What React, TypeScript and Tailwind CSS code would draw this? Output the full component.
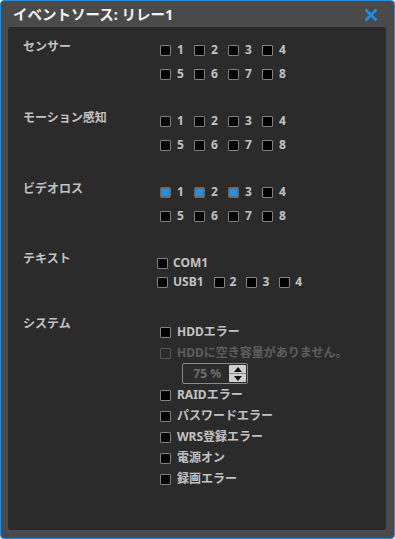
import React from "react";

const font = { fontFamily: '"Noto Sans", "Noto Sans CJK JP", sans-serif' };

function Box({ checked = false, disabled = false }: { checked?: boolean; disabled?: boolean }) {
  if (checked)
    return <span className="inline-block w-[11px] h-[11px] shrink-0 rounded-[2px] border-2 border-[#6b6b6b] bg-[#1c92ee]" />;
  if (disabled)
    return <span className="inline-block w-[11px] h-[11px] shrink-0 rounded-[1px] border border-[#575757] bg-[#2b2b2b]" />;
  return <span className="inline-block w-[11px] h-[11px] shrink-0 rounded-[1px] border border-[#828282] bg-black" />;
}

function NumItem({ n, checked = false }: { n: string; checked?: boolean }) {
  return (
    <div className="w-[34px] flex items-center gap-[6px]">
      <Box checked={checked} />
      <span>{n}</span>
    </div>
  );
}

function NumRows({ a, b, checked = [] as string[] }: { a: string[]; b: string[]; checked?: string[] }) {
  return (
    <div className="flex flex-col gap-[8px] pt-[3px] pl-[1px]">
      <div className="flex h-[16px] items-center">
        {a.map((n) => (
          <NumItem key={n} n={n} checked={checked.includes(n)} />
        ))}
      </div>
      <div className="flex h-[16px] items-center">
        {b.map((n) => (
          <NumItem key={n} n={n} checked={checked.includes(n)} />
        ))}
      </div>
    </div>
  );
}

function SysItem({ label, disabled = false }: { label: string; disabled?: boolean }) {
  return (
    <div className={"flex h-[16px] items-center gap-[6px] " + (disabled ? "text-[#5e5e5e]" : "")}>
      <Box disabled={disabled} />
      <span>{label}</span>
    </div>
  );
}

export default function App() {
  return (
    <div
      style={font}
      className="w-[395px] h-[539px] rounded-[4px] border border-[#2a8ee0] bg-[#4a4a4a] flex flex-col overflow-hidden"
    >
      <div className="h-[26px] shrink-0 flex items-center justify-between pl-[12px] pr-[16px]">
        <span className="text-[14.5px] font-bold text-[#f2f2f2] leading-none pt-[1px]">イベントソース: リレー1</span>
        <svg width="14" height="14" viewBox="0 0 14 14" className="mt-[2px]">
          <path d="M1.5 1.5 L12.5 12.5 M12.5 1.5 L1.5 12.5" stroke="#1d8fe8" strokeWidth="2.6" strokeLinecap="butt" />
        </svg>
      </div>
      <div className="flex-1 ml-[7px] mr-[8px] mb-[8px] rounded-[3px] bg-[#2b2b2b] pt-[12px] pl-[15px] text-[12px] font-bold leading-[16px] text-[#c2c2c2]">
        {/* Sensor */}
        <div className="flex">
          <div className="w-[136px] shrink-0">センサー</div>
          <NumRows a={["1", "2", "3", "4"]} b={["5", "6", "7", "8"]} />
        </div>
        {/* Motion */}
        <div className="flex mt-[28px]">
          <div className="w-[136px] shrink-0">モーション感知</div>
          <NumRows a={["1", "2", "3", "4"]} b={["5", "6", "7", "8"]} />
        </div>
        {/* Video loss */}
        <div className="flex mt-[28px]">
          <div className="w-[136px] shrink-0">ビデオロス</div>
          <NumRows a={["1", "2", "3", "4"]} b={["5", "6", "7", "8"]} checked={["1", "2", "3"]} />
        </div>
        {/* Text */}
        <div className="flex mt-[27px]">
          <div className="w-[134px] shrink-0">テキスト</div>
          <div className="flex flex-col gap-[3px] pt-[4px]">
            <div className="flex h-[16px] items-center gap-[5px]">
              <Box />
              <span>COM1</span>
            </div>
            <div className="flex h-[16px] items-center">
              <div className="flex items-center gap-[5px] mr-[10px]">
                <Box />
                <span>USB1</span>
              </div>
              <div className="flex items-center gap-[5px] mr-[10px]">
                <Box />
                <span>2</span>
              </div>
              <div className="flex items-center gap-[5px] mr-[10px]">
                <Box />
                <span>3</span>
              </div>
              <div className="flex items-center gap-[5px]">
                <Box />
                <span>4</span>
              </div>
            </div>
          </div>
        </div>
        {/* System */}
        <div className="flex mt-[26px]">
          <div className="w-[136px] shrink-0">システム</div>
          <div className="flex flex-col pt-[8px] pl-[1px]">
            <SysItem label="HDDエラー" />
            <div className="mt-[5px]">
              <SysItem label="HDDに空き容量がありません。" disabled />
            </div>
            <div className="mt-[2px] ml-[22px] w-[66px] h-[21px] rounded-[2px] border border-[#8a8a8a] flex items-center justify-end pr-[1px]">
              <span className="text-[#6f6f6f] mr-[8px] font-bold">75 %</span>
              <div className="w-[17px] h-[17px] rounded-[1px] bg-[#cfcfcf] flex flex-col">
                <div className="flex-1 flex items-center justify-center border-b border-[#8a8a8a]">
                  <svg width="8" height="5" viewBox="0 0 8 5">
                    <path d="M0 5 L4 0 L8 5 Z" fill="#111" />
                  </svg>
                </div>
                <div className="flex-1 flex items-center justify-center">
                  <svg width="8" height="5" viewBox="0 0 8 5">
                    <path d="M0 0 L4 5 L8 0 Z" fill="#111" />
                  </svg>
                </div>
              </div>
            </div>
            <div className="mt-[3px] flex flex-col gap-[5px]">
              <SysItem label="RAIDエラー" />
              <SysItem label="パスワードエラー" />
              <SysItem label="WRS登録エラー" />
              <SysItem label="電源オン" />
              <SysItem label="録画エラー" />
            </div>
          </div>
        </div>
      </div>
    </div>
  );
}
